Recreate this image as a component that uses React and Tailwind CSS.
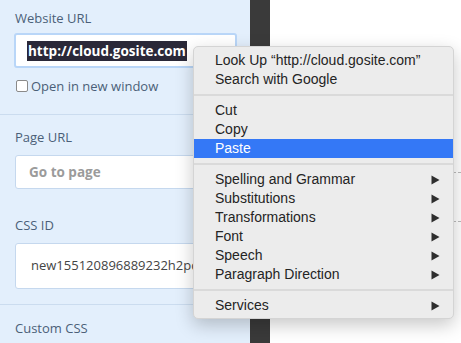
import { Fragment } from 'react';

const menuGroups = [
    [
        { label: 'Look Up “http://cloud.gosite.com”' },
        { label: 'Search with Google' }
    ],
    [
        { label: 'Cut' },
        { label: 'Copy' },
        { label: 'Paste', active: true }
    ],
    [
        { label: 'Spelling and Grammar', sub: true },
        { label: 'Substitutions', sub: true },
        { label: 'Transformations', sub: true },
        { label: 'Font', sub: true },
        { label: 'Speech', sub: true },
        { label: 'Paragraph Direction', sub: true }
    ],
    [
        { label: 'Services', sub: true }
    ]
];

function Arrow({ active }) {
    return (
        <svg width="9" height="10" viewBox="0 0 9 10" className={active ? 'text-white' : 'text-[#2e2e2e]'}>
            <path d="M0.5 0.5 L8.5 5 L0.5 9.5 Z" fill="currentColor" />
        </svg>
    );
}

function ContextMenu() {
    return (
        <div className="absolute left-[193px] top-[46px] w-[261px] rounded-[5px] bg-[#ececec] border border-[#d4d4d4] shadow-[0_6px_18px_rgba(0,0,0,0.22)] pt-[4px] pb-[3px] font-['Liberation_Sans',sans-serif] text-[14px] text-[#242424]">
            {menuGroups.map((group, gi) => (
                <Fragment key={gi}>
                    {gi > 0 && <div className="h-[2px] bg-[#dadada] my-[5px]"></div>}
                    {group.map((item) => (
                        <div
                            key={item.label}
                            className={`h-[19px] flex items-center justify-between pl-[21px] pr-[13px] ${item.active ? 'bg-[#3478f6] text-white' : ''}`}
                        >
                            <span>{item.label}</span>
                            {item.sub && <Arrow active={item.active} />}
                        </div>
                    ))}
                </Fragment>
            ))}
        </div>
    );
}

export default function App() {
    return (
        <div className="relative w-[461px] h-[343px] overflow-hidden flex bg-white">
            {/* settings panel */}
            <div className="w-[250px] h-full bg-[#e3effc] font-['Open_Sans',sans-serif] text-[#4b5f78]">
                <div className="px-[14px] pt-[8px] h-[115px] border-b border-[#cbdcef]">
                    <label className="block text-[13px] leading-[20px] mb-[5px] pl-[1px]">Website URL</label>
                    <div className="h-[35px] w-[223px] bg-white rounded-[3px] border-2 border-[#b9d6f8] flex items-center pl-[11px]">
                        <span className="bg-[#2a2838] text-white font-bold text-[13.5px] leading-[20px] px-[1px]">http://cloud.gosite.com</span>
                    </div>
                    <div className="flex items-center gap-[3px] mt-[9px] pl-[2px]">
                        <span className="w-[12px] h-[12px] rounded-[2px] border border-[#8a8a8a] bg-white"></span>
                        <span className="text-[13px] leading-[18px]">Open in new window</span>
                    </div>
                </div>
                <div className="px-[15px] pt-[12px] h-[190px] border-b border-[#cbdcef]">
                    <label className="block text-[13px] leading-[20px] mb-[8px]">Page URL</label>
                    <div className="h-[34px] w-[222px] bg-white rounded-[3px] border border-[#c5d8ee] flex items-center pl-[13px]">
                        <span className="text-[13.5px] font-bold text-[#9b9b9b]">Go to page</span>
                    </div>
                    <label className="block text-[13px] leading-[20px] mt-[26px] mb-[8px]">CSS ID</label>
                    <div className="h-[46px] w-[222px] bg-white rounded-[3px] border border-[#c5d8ee] flex items-center pl-[15px] overflow-hidden">
                        <span className="text-[13px] text-[#444] whitespace-nowrap">new155120896889232h2pdo</span>
                    </div>
                </div>
                <div className="px-[15px] pt-[13px]">
                    <label className="block text-[13px] leading-[20px]">Custom CSS</label>
                </div>
            </div>
            {/* divider strip */}
            <div className="w-[20px] h-full bg-[#3a3a3a]"></div>
            {/* canvas */}
            <div className="flex-1 h-full bg-white relative">
                <div className="absolute right-0 top-[172px] w-[8px] border-t border-dashed border-[#bbb]"></div>
                <div className="absolute right-0 top-[221px] w-[8px] border-t border-dashed border-[#bbb]"></div>
            </div>
            <ContextMenu />
        </div>
    );
}
